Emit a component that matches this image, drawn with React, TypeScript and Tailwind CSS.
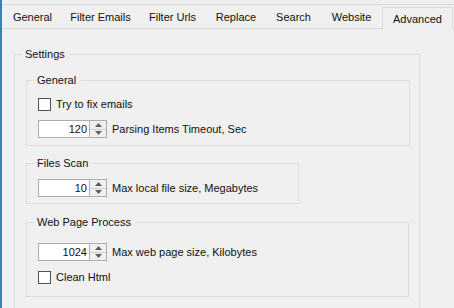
import React from "react";

const tabs = [
  { label: "General", w: "w-[59px]" },
  { label: "Filter Emails", w: "w-[77px]" },
  { label: "Filter Urls", w: "w-[67px]" },
  { label: "Replace", w: "w-[60px]" },
  { label: "Search", w: "w-[55px]" },
  { label: "Website", w: "w-[61px]" },
];

const Checkbox = ({ label, className }: { label: string; className?: string }) => (
  <div className={"flex items-center h-[13px] " + (className || "")}>
    <span className="w-[13px] h-[13px] border border-[#505050] bg-white shrink-0" />
    <span className="ml-[5px] leading-[13px]">{label}</span>
  </div>
);

const Spin = ({ value, label, className }: { value: string; label: string; className?: string }) => (
  <div className={"flex items-center " + (className || "")}>
    <div className="flex h-[18px] w-[69px] border border-[#abadb3] bg-white">
      <div className="flex-1 text-right pr-[2px] leading-[16px] border-r border-[#abadb3]">{value}</div>
      <div className="w-[16px] flex flex-col bg-[#f0f0f0]">
        <div className="flex-1 flex items-center justify-center border-b border-[#d0d0d0]">
          <svg width="7" height="4" viewBox="0 0 7 4">
            <path d="M0 4 L3.5 0 L7 4 Z" fill="#606060" />
          </svg>
        </div>
        <div className="flex-1 flex items-center justify-center">
          <svg width="7" height="4" viewBox="0 0 7 4">
            <path d="M0 0 L3.5 4 L7 0 Z" fill="#606060" />
          </svg>
        </div>
      </div>
    </div>
    <span className="ml-[5px]">{label}</span>
  </div>
);

// group box: padding lives on an inner div so the legend keeps its own offset
const Group = ({
  title,
  className,
  inner,
  children,
}: {
  title: string;
  className?: string;
  inner?: string;
  children: React.ReactNode;
}) => (
  <fieldset className={"border border-[#dcdcdc] " + (className || "")}>
    <legend className="ml-[7px] pl-[3px] pr-[5px] leading-[14px]">{title}</legend>
    <div className={inner}>{children}</div>
  </fieldset>
);

export default function App() {
  return (
    <div
      className="w-[454px] h-[308px] overflow-hidden bg-[#f0f0f0] border-l-2 border-[#3b7fbf] text-[11px] text-[#111]"
      style={{ fontFamily: '"Liberation Sans", Arial, sans-serif' }}
    >
      {/* TAB STRIP */}
      <div className="h-[4px]" />
      <div className="border-t border-[#d9d9d9] h-[25px] flex items-end border-b pl-[1px]">
        {tabs.map((t) => (
          <div key={t.label} className={t.w + " h-[23px] pt-[2px] flex items-center justify-center"}>
            {t.label}
          </div>
        ))}
        <div className="w-[71px] h-[22px] -mb-px pt-[1px] border border-b-0 border-[#d9d9d9] bg-[#f0f0f0] flex items-center justify-center">
          Advanced
        </div>
      </div>

      {/* SETTINGS */}
      <Group title="Settings" className="ml-[12px] mt-[18px] w-[406px] h-[400px]" inner="pl-[11px] pt-[12px]">
        <Group title="General" className="w-[384px]" inner="pl-[11px] pt-[11px] pb-[7px]">
          <Checkbox label="Try to fix emails" />
          <Spin value="120" label="Parsing Items Timeout, Sec" className="mt-[9px]" />
        </Group>
        <Group title="Files Scan" className="w-[273px] mt-[10px]" inner="pl-[11px] pt-[9px] pb-[6px]">
          <Spin value="10" label="Max local file size, Megabytes" />
        </Group>
        <Group title="Web Page Process" className="w-[383px] mt-[11px]" inner="pl-[11px] pt-[14px] pb-[12px]">
          <Spin value="1024" label="Max web page size, Kilobytes" />
          <Checkbox label="Clean Html" className="mt-[10px]" />
        </Group>
      </Group>
    </div>
  );
}
